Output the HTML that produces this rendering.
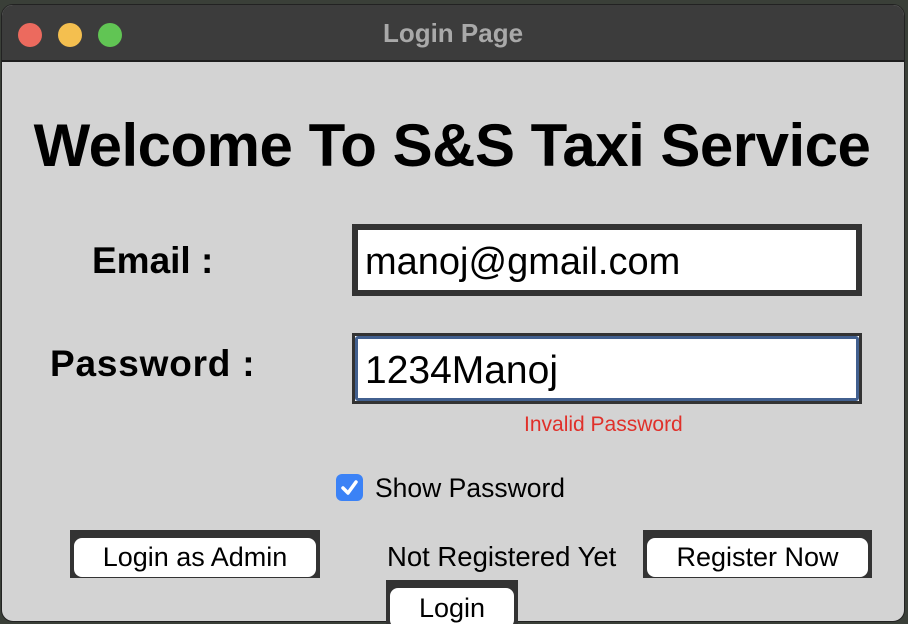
<!DOCTYPE html>
<html style="overflow:hidden;height:624px"><head><style>
body{margin:0;width:908px;height:624px;overflow:hidden;background:#3a3f38;font-family:"Liberation Sans",sans-serif;position:relative}
.win{position:absolute;left:1px;top:4px;width:902px;height:616px;border-radius:12px;overflow:hidden;background:#d3d3d3;border:1px solid #222}
.tb{position:absolute;left:0;top:0;right:0;height:55px;background:#3c3c3c;border-bottom:2px solid #1e1e1e}
.dot{position:absolute;top:18px;width:24px;height:24px;border-radius:50%}
.t{position:absolute;left:0;right:0;top:13px;text-align:center;color:#a9a9a9;font-weight:bold;font-size:26px}
.a{position:absolute;white-space:nowrap}
.box{position:absolute;background:#fff;border:6px solid #333;box-sizing:border-box}
.btn{position:absolute;background:#333}
.btn div{position:absolute;background:#fff;border-radius:8px;text-align:center;font-size:27px;color:#000}
</style></head><body>
<div class="win">
<div class="tb">
<div class="dot" style="left:16px;background:#ec6a5e"></div>
<div class="dot" style="left:56px;background:#f4bf4f"></div>
<div class="dot" style="left:96px;background:#61c554"></div>
<div class="t">Login Page</div>
</div>
</div>
<div class="a" style="left:0;width:904px;text-align:center;top:111px;font-size:60px;font-weight:bold;letter-spacing:-0.5px;color:#000">Welcome To S&amp;S Taxi Service</div>
<div class="a" style="left:92px;top:240px;font-size:37px;font-weight:bold">Email :</div>
<div class="a" style="left:50px;top:343px;font-size:37px;font-weight:bold;letter-spacing:0.8px">Password :</div>
<div class="box" style="left:352px;top:224px;width:510px;height:72px"><div class="a" style="left:7px;top:11px;font-size:38px">manoj@gmail.com</div></div>
<div class="box" style="left:352px;top:333px;width:510px;height:71px;border-width:3px;border-color:#333;"><div style="position:absolute;inset:0;border:3px solid #42608f;border-radius:3px"></div><div class="a" style="left:10px;top:13px;font-size:39px">1234Manoj</div></div>
<div class="a" style="left:524px;top:413px;font-size:21px;color:#e0302a">Invalid Password</div>
<div class="a" style="left:336px;top:474px;width:27px;height:27px;background:#3b82f6;border-radius:6px"><svg width="27" height="27"><path d="M7 14 L12 19 L20 8" stroke="#fff" stroke-width="3.5" fill="none" stroke-linecap="round" stroke-linejoin="round"/></svg></div>
<div class="a" style="left:375px;top:473px;font-size:26.5px">Show Password</div>
<div class="btn" style="left:70px;top:530px;width:250px;height:48px"><div style="left:4px;top:8px;width:242px;height:39px;line-height:39px">Login as Admin</div></div>
<div class="a" style="left:387px;top:541px;font-size:27.5px">Not Registered Yet</div>
<div class="btn" style="left:643px;top:530px;width:229px;height:48px"><div style="left:4px;top:8px;width:221px;height:39px;line-height:39px">Register Now</div></div>
<div class="btn" style="left:386px;top:580px;width:132px;height:44px"><div style="left:4px;top:8px;width:124px;height:40px;line-height:40px">Login</div></div>
</body></html>
